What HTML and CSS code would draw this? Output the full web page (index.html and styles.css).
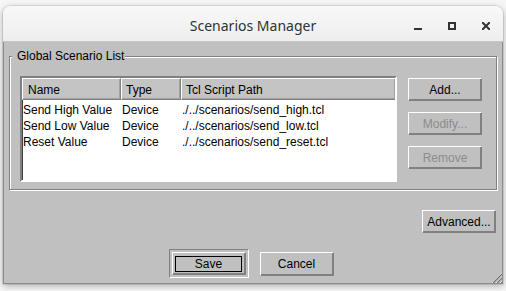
FILE: index.html
```html
<!DOCTYPE html>
<html>
<head>
<meta charset="utf-8">
<link rel="stylesheet" href="styles.css">
</head>
<body>
<div class="window">
  <div class="titlebar">
    <div></div>
    <div class="title">Scenarios Manager</div>
    <div class="controls">
      <svg class="ctl" width="8" height="8" viewBox="0 0 8 8"><rect x="0" y="6" width="8" height="2" fill="#2e3436"/></svg>
      <svg class="ctl" width="8" height="8" viewBox="0 0 8 8"><rect x="1" y="1" width="6" height="6" fill="none" stroke="#2e3436" stroke-width="2"/></svg>
      <svg class="ctl" width="8" height="8" viewBox="0 0 8 8"><path d="M0.7 0.7 L7.3 7.3 M7.3 0.7 L0.7 7.3" stroke="#2e3436" stroke-width="2" stroke-linecap="square"/></svg>
    </div>
  </div>
  <div class="client">
    <fieldset class="group">
      <legend>Global Scenario List</legend>
      <div class="group-body">
        <div class="list">
          <table class="table">
            <colgroup><col class="c1"><col class="c2"><col class="c3"></colgroup>
            <thead>
              <tr><th>Name</th><th>Type</th><th>Tcl Script Path</th></tr>
            </thead>
            <tbody>
              <tr class="first"><td>Send High Value</td><td>Device</td><td>./../scenarios/send_high.tcl</td></tr>
              <tr><td>Send Low Value</td><td>Device</td><td>./../scenarios/send_low.tcl</td></tr>
              <tr><td>Reset Value</td><td>Device</td><td>./../scenarios/send_reset.tcl</td></tr>
            </tbody>
          </table>
        </div>
        <div class="side">
          <button class="btn">Add...</button>
          <button class="btn" disabled>Modify...</button>
          <button class="btn" disabled>Remove</button>
        </div>
      </div>
    </fieldset>
    <div class="adv-row">
      <button class="btn">Advanced...</button>
    </div>
    <div class="bottom-row">
      <div class="default-frame">
        <button class="btn save"><span class="focus">Save</span></button>
      </div>
      <button class="btn cancel">Cancel</button>
    </div>
    <svg class="grip" width="12" height="12" viewBox="0 0 12 12">
      <path d="M12 2 L2 12 M12 6 L6 12 M12 10 L10 12" stroke="#ffffff" stroke-width="1"/>
      <path d="M12 3 L3 12 M12 7 L7 12 M12 11 L11 12" stroke="#707070" stroke-width="1.2"/>
    </svg>
  </div>
</div>
</body>
</html>
```
FILE: styles.css
```css
* { box-sizing: border-box; }
html, body { margin: 0; }
body {
  width: 506px;
  height: 291px;
  overflow: hidden;
  padding: 6px 3px 0;
  background: #f6f6f6;
  font-family: "Liberation Sans", Arial, sans-serif;
  font-size: 12px;
  color: #000;
}
.window {
  width: 500px;
  height: 278px;
  display: flex;
  flex-direction: column;
  border-radius: 8px 8px 0 0;
  box-shadow: 0 2px 7px rgba(0,0,0,0.3), 0 0 0 1px rgba(0,0,0,0.08);
}
.titlebar {
  height: 36px;
  flex: none;
  display: grid;
  grid-template-columns: 1fr auto 1fr;
  align-items: center;
  background: linear-gradient(#f8f8f8, #eeeeee);
  border-radius: 8px 8px 0 0;
  border-bottom: 1px solid #c6c6c6;
  font-family: "Noto Sans", sans-serif;
  font-size: 14px;
  color: #2e3436;
  padding-top: 3px;
}
.title { grid-column: 2; }
.controls {
  justify-self: end;
  display: flex;
  align-items: center;
  gap: 26px;
  padding-right: 13px;
  padding-top: 2px;
}
.ctl { display: block; }
.client {
  flex: 1;
  position: relative;
  display: flex;
  flex-direction: column;
  background: #c0c0c0;
  border: 1px solid #8c8c8c;
  border-top: 0;
  padding: 7px 5px 0 5px;
}
.group {
  margin: 0;
  padding: 13px 14px 7px 0;
  border: 1px solid #808080;
  box-shadow: inset 1px 1px 0 #fff, 1px 1px 0 #fff;
  min-width: 0;
}
.group legend {
  margin-left: 2px;
  padding: 0 1px 0 5px;
  line-height: 14px;
  background: #c0c0c0;
}
.group-body { display: flex; gap: 11px; padding-left: 10px; }
.list {
  width: 377px;
  height: 106px;
  background: #fff;
  border: 2px solid;
  border-color: #808080 #ffffff #ffffff #808080;
  box-shadow: inset 1px 1px 0 #404040;
  overflow: hidden;
}
.table {
  width: 374px;
  table-layout: fixed;
  border-collapse: separate;
  border-spacing: 0;
}
.c1 { width: 99px; }
.c2 { width: 60px; }
.c3 { width: 215px; }
.table th {
  height: 22px;
  padding: 2px 0 0 5px;
  text-align: left;
  font-weight: normal;
  background: #c4c4c4;
  border: 1px solid;
  border-color: #ffffff #808080 #808080 #ffffff;
  box-shadow: inset -1px -1px 0 #a0a0a0;
  white-space: nowrap;
}
.table th:nth-child(2), .table th:nth-child(3) { padding-left: 4px; }
.table td {
  height: 16px;
  padding: 0 0 0 1px;
  white-space: nowrap;
  line-height: 16px;
}
.table .first td { height: 18px; padding-top: 2px; }
.side { display: flex; flex-direction: column; gap: 11px; padding-top: 2px; }
.btn {
  width: 74px;
  height: 23px;
  margin: 0;
  padding: 0;
  font-family: "Liberation Sans", Arial, sans-serif;
  font-size: 12px;
  color: #000;
  background: #c0c0c0;
  border: 1px solid;
  border-color: #ffffff #808080 #808080 #ffffff;
  box-shadow: inset -1px -1px 0 #808080;
}
.btn:disabled { color: #8c8c8c; }
.adv-row {
  display: flex;
  justify-content: flex-end;
  padding-top: 20px;
  padding-right: 1px;
}
.bottom-row {
  display: flex;
  justify-content: center;
  align-items: center;
  gap: 11px;
  padding-top: 16px;
  padding-right: 4px;
}
.default-frame {
  border: 1px solid;
  border-color: #808080 #ffffff #ffffff #808080;
  padding: 2px;
}
.save { display: flex; align-items: center; justify-content: center; }
.focus {
  display: flex;
  align-items: center;
  justify-content: center;
  width: 67px;
  height: 16px;
  border: 1px solid #000;
}
.cancel { height: 24px; }
.grip { position: absolute; right: 0; bottom: 0; }
```
